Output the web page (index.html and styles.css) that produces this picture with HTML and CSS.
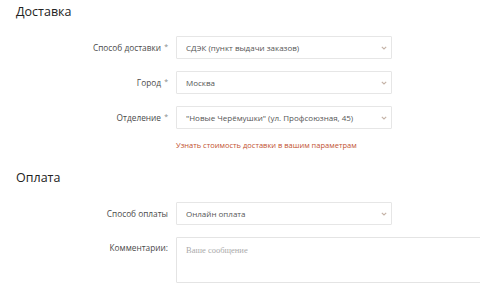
FILE: index.html
```html
<!DOCTYPE html>
<html lang="ru">
<head>
    <meta charset="UTF-8">
    <meta name="viewport" content="width=device-width, initial-scale=1.0">
    <title>Оформление заказа</title>
    <link rel="stylesheet" href="styles.css">
</head>
<body>
    <h2 class="section-title">Доставка</h2>

    <div class="form-row">
        <label class="form-label" for="method">Способ доставки <span class="req">*</span></label>
        <div class="select-wrap">
            <select id="method" class="form-select">
                <option>СДЭК (пункт выдачи заказов)</option>
            </select>
            <svg class="chevron" width="6" height="4" viewBox="0 0 6 4"><path d="M0.8 0.8 L3 3 L5.2 0.8" fill="none" stroke="#c4b2a6" stroke-width="1.1"/></svg>
        </div>
    </div>

    <div class="form-row">
        <label class="form-label" for="city">Город <span class="req">*</span></label>
        <div class="select-wrap">
            <select id="city" class="form-select">
                <option>Москва</option>
            </select>
            <svg class="chevron" width="6" height="4" viewBox="0 0 6 4"><path d="M0.8 0.8 L3 3 L5.2 0.8" fill="none" stroke="#c4b2a6" stroke-width="1.1"/></svg>
        </div>
    </div>

    <div class="form-row">
        <label class="form-label" for="office">Отделение <span class="req">*</span></label>
        <div class="select-wrap">
            <select id="office" class="form-select">
                <option>"Новые Черёмушки" (ул. Профсоюзная, 45)</option>
            </select>
            <svg class="chevron" width="6" height="4" viewBox="0 0 6 4"><path d="M0.8 0.8 L3 3 L5.2 0.8" fill="none" stroke="#c4b2a6" stroke-width="1.1"/></svg>
        </div>
    </div>

    <div class="form-row link-row">
        <span></span>
        <a class="price-link" href="#">Узнать стоимость доставки в вашим параметрам</a>
    </div>

    <h2 class="section-title pay-title">Оплата</h2>

    <div class="form-row">
        <label class="form-label" for="payment">Способ оплаты</label>
        <div class="select-wrap">
            <select id="payment" class="form-select">
                <option>Онлайн оплата</option>
            </select>
            <svg class="chevron" width="6" height="4" viewBox="0 0 6 4"><path d="M0.8 0.8 L3 3 L5.2 0.8" fill="none" stroke="#c4b2a6" stroke-width="1.1"/></svg>
        </div>
    </div>

    <div class="form-row top">
        <label class="form-label" for="comment">Комментарии:</label>
        <textarea id="comment" class="form-textarea" placeholder="Ваше сообщение"></textarea>
    </div>
</body>
</html>
```

FILE: styles.css
```css
body {
    font-family: "Open Sans", Arial, sans-serif;
    margin: 0;
    padding: 0 16px;
    color: #333;
    background: #fff;
    overflow: hidden;
}
.section-title {
    font-size: 12.5px;
    font-weight: normal;
    color: #222;
    margin: 0 0 13px;
    padding-top: 1px;
    line-height: 22px;
}
.pay-title {
    margin-top: 16px;
    margin-bottom: 13px;
}
.form-row {
    display: grid;
    grid-template-columns: 152px 216px;
    column-gap: 8px;
    align-items: center;
    margin-bottom: 12px;
}
.form-row.top {
    align-items: start;
    grid-template-columns: 152px 320px;
}
.form-label {
    text-align: right;
    font-size: 8.3px;
    color: #4a4a4a;
}
.form-row.top .form-label {
    padding-top: 5px;
}
.req {
    color: #888;
    font-size: 7px;
    vertical-align: top;
    margin-left: 1px;
}
.select-wrap {
    position: relative;
}
.form-select {
    appearance: none;
    -webkit-appearance: none;
    display: block;
    width: 100%;
    height: 23px;
    border: 1px solid #e6e6e6;
    border-radius: 1px;
    background: #fff;
    font-family: "Open Sans", Arial, sans-serif;
    font-weight: 400;
    font-size: 8px;
    color: #555;
    padding: 0 20px 0 9px;
    box-sizing: border-box;
}
.chevron {
    position: absolute;
    right: 5px;
    top: 10px;
}
.link-row {
    margin-top: -1px;
}
.price-link {
    font-size: 7.5px;
    color: #c2522f;
    text-decoration: none;
}
.form-textarea {
    display: block;
    height: 46px;
    border: 1px solid #e4e4e4;
    border-radius: 1px;
    box-sizing: border-box;
    padding: 7px 9px;
    font-family: "Liberation Serif", "Times New Roman", serif;
    font-size: 8.5px;
    resize: none;
}
.form-textarea::placeholder {
    color: #aaa;
}
```
